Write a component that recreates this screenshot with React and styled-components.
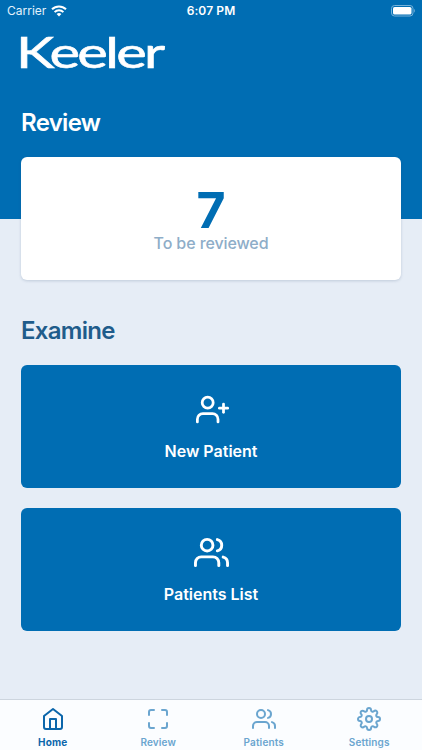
import React from 'react';
import styled, { createGlobalStyle } from 'styled-components';
import { FiHome, FiMaximize, FiSettings, FiUserPlus, FiUsers } from 'react-icons/fi';

const GlobalStyle = createGlobalStyle`
* {
  box-sizing: border-box;
}
body {
  margin: 0;
  font-family: Inter, 'Liberation Sans', sans-serif;
}
button {
  font-family: inherit;
  border: 0;
  padding: 0;
  cursor: pointer;
}
`

const Screen = styled.div`
width: 100%;
height: 750px;
display: flex;
flex-direction: column;
overflow: hidden;
background: linear-gradient(#006db3 218.5px, #e6edf6 218.5px);
`

const StatusBar = styled.div`
height: 22px;
flex-shrink: 0;
display: grid;
grid-template-columns: 1fr auto 1fr;
align-items: center;
padding: 0 7px;
color: white;
font-size: 12px;
line-height: 22px;
`
const Carrier = styled.div`
display: flex;
align-items: center;
gap: 5px;
color: #e3f2fc;
`
const Time = styled.div`
font-size: 12px;
font-weight: 600;
letter-spacing: 0.1px;
`
const BatteryIcon = styled.svg`
justify-self: end;
`

const Content = styled.main`
flex: 1;
display: flex;
flex-direction: column;
padding: 12px 21px 0;
`
const Logo = styled.svg`
display: block;
width: 150px;
height: 38px;
flex-shrink: 0;
overflow: visible;
font-family: Lato, sans-serif;
font-size: 43px;
`
const Title = styled.h2`
margin: ${props => props.$top}px 0 0;
height: 30px;
line-height: 30px;
font-size: 24px;
font-weight: 600;
letter-spacing: -0.7px;
color: ${props => props.$color};
`

const ReviewCard = styled.button`
height: 122.5px;
margin-top: 19px;
flex-shrink: 0;
display: flex;
flex-direction: column;
align-items: center;
padding-top: 27px;
background: white;
border-radius: 6px;
box-shadow: 0 1px 3px rgba(40, 70, 110, 0.2);
`
const Count = styled.span`
height: 49px;
line-height: 52px;
font-size: 50px;
font-weight: 700;
color: #006db3;
`
const CountLabel = styled.span`
line-height: 20px;
font-size: 16px;
font-weight: 500;
letter-spacing: -0.1px;
color: #8eadc8;
`

const ActionButton = styled.button`
height: 122.5px;
margin-top: 19px;
flex-shrink: 0;
display: flex;
flex-direction: column;
align-items: center;
background: #006db3;
border-radius: 6px;
color: white;
font-size: 16px;
font-weight: 600;
line-height: 20px;
& + & {
  margin-top: 20.5px;
}
`
const ActionIcon = styled.span`
height: 76px;
display: flex;
align-items: center;
padding-top: 13px;
padding-left: ${props => props.$shift || 0}px;
`

const TabBar = styled.nav`
height: 51px;
flex-shrink: 0;
display: grid;
grid-template-columns: repeat(4, 1fr);
background: #fbfdff;
border-top: 1px solid #cdd5de;
`
const Tab = styled.button`
display: flex;
flex-direction: column;
align-items: center;
padding-top: 7px;
gap: 4px;
background: transparent;
font-size: 10px;
line-height: 14px;
font-weight: ${props => props.$active ? 700 : 600};
letter-spacing: 0.15px;
color: ${props => props.$active ? '#0b66ab' : '#6aa5cf'};
`

const tabs = [
  { label: 'Home', Icon: FiHome },
  { label: 'Review', Icon: FiMaximize },
  { label: 'Patients', Icon: FiUsers },
  { label: 'Settings', Icon: FiSettings },
]

export default function App() {
  return (
    <>
      <GlobalStyle />
      <Screen>
        <StatusBar>
          <Carrier>
            Carrier
            <svg width="16" height="12" viewBox="0 0 16 12" fill="none" stroke="white" strokeWidth="2">
              <path d="M1 4.3a10 10 0 0 1 14 0" />
              <path d="M3.6 7.1a6.2 6.2 0 0 1 8.8 0" />
              <path d="M8 11.5L5.6 9.1a3.4 3.4 0 0 1 4.8 0z" fill="white" stroke="none" />
            </svg>
          </Carrier>
          <Time>6:07 PM</Time>
          <BatteryIcon width="24" height="12" viewBox="0 0 24 12">
            <rect x="0.5" y="0.5" width="21.5" height="10.5" rx="3" fill="none" stroke="#75b2da" />
            <rect x="2" y="2" width="18.5" height="7.5" rx="1.6" fill="white" />
            <path d="M23 4v3.6c1.1-.5 1.1-3.1 0-3.6z" fill="#75b2da" />
          </BatteryIcon>
        </StatusBar>

        <Content>
          <Logo viewBox="0 0 150 38">
            <text x="-5" y="33.5" textLength="146.5" lengthAdjust="spacingAndGlyphs" fill="white" stroke="white" strokeWidth="0.6" letterSpacing="-2">Keeler</text>
          </Logo>
          <Title $top={36} $color="white">Review</Title>
          <ReviewCard>
            <Count>7</Count>
            <CountLabel>To be reviewed</CountLabel>
          </ReviewCard>

          <Title $top={36.5} $color="#1f5c8b">Examine</Title>
          <ActionButton>
            <ActionIcon $shift={3}><FiUserPlus size={33} /></ActionIcon>
            New Patient
          </ActionButton>
          <ActionButton>
            <ActionIcon><FiUsers size={35} /></ActionIcon>
            Patients List
          </ActionButton>
        </Content>

        <TabBar>
          {tabs.map(({ label, Icon }, index) => (
            <Tab key={label} $active={index === 0}>
              <Icon size={24} />
              {label}
            </Tab>
          ))}
        </TabBar>
      </Screen>
    </>
  )
}
